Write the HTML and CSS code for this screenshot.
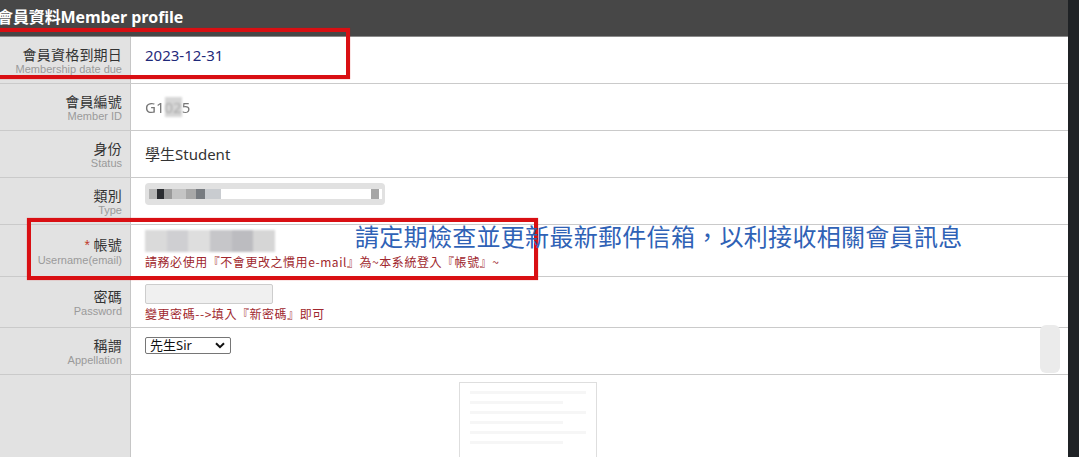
FILE: index.html
```html
<!DOCTYPE html>
<html lang="zh-Hant">
<head>
<meta charset="utf-8">
<title>會員資料</title>
<link rel="stylesheet" href="styles.css">
</head>
<body>
<div class="screen">
  <main class="page">
    <header class="title-bar"><h1>會員資料Member profile</h1></header>
    <div class="form">
      <div class="row r47">
        <div class="label"><span class="zh">會員資格到期日</span><span class="en">Membership date due</span></div>
        <div class="value v-top"><span class="date">2023-12-31</span></div>
      </div>
      <div class="row r47">
        <div class="label"><span class="zh">會員編號</span><span class="en">Member ID</span></div>
        <div class="value v-center"><span class="memid">G1<span class="smudge">02</span>5</span></div>
      </div>
      <div class="row r47">
        <div class="label"><span class="zh">身份</span><span class="en">Status</span></div>
        <div class="value v-center"><span class="plain">學生Student</span></div>
      </div>
      <div class="row r47">
        <div class="label"><span class="zh">類別</span><span class="en">Type</span></div>
        <div class="value v-p5">
          <div class="type-field">
            <div class="type-inner">
              <i class="px d1"></i><i class="px d2"></i><i class="px d3"></i><i class="px d4"></i><i class="px d5"></i><i class="px d6"></i><i class="px d7"></i>
              <span class="type-end"></span>
            </div>
          </div>
        </div>
      </div>
      <div class="row r52">
        <div class="label"><span class="zh"><span class="req">*</span> 帳號</span><span class="en">Username(email)</span></div>
        <div class="value v-p5">
          <div class="mail-field">
            <i class="mp m1"></i><i class="mp m2"></i><i class="mp m3"></i><i class="mp m4"></i><i class="mp m5"></i><i class="mp m6"></i>
          </div>
          <p class="note">請務必使用『不會更改之慣用e-mail』為~本系統登入『帳號』~</p>
        </div>
      </div>
      <div class="row r51">
        <div class="label"><span class="zh">密碼</span><span class="en">Password</span></div>
        <div class="value v-p8">
          <div class="pw-field"></div>
          <p class="note">變更密碼-->填入『新密碼』即可</p>
        </div>
      </div>
      <div class="row r47">
        <div class="label"><span class="zh">稱謂</span><span class="en">Appellation</span></div>
        <div class="value v-p9">
          <div class="select"><span>先生Sir</span>
            <svg class="chev" width="10" height="7" viewBox="0 0 10 7"><path d="M1 1.2 5 5.2 9 1.2" fill="none" stroke="#111" stroke-width="2"/></svg>
          </div>
        </div>
      </div>
      <div class="row rlast">
        <div class="label"></div>
        <div class="value v-p8">
          <div class="photo">
            <i class="ln"></i><i class="ln s"></i><i class="ln"></i><i class="ln s"></i><i class="ln"></i><i class="ln s"></i>
          </div>
        </div>
      </div>
    </div>
  </main>
  <div class="edge"></div>

  <div class="mark mark-1"></div>
  <div class="mark mark-2"></div>
  <p class="callout">請定期檢查並更新最新郵件信箱，以利接收相關會員訊息</p>
  <div class="thumb"></div>
</div>
</body>
</html>
```
FILE: styles.css
```css
html, body {
  margin: 0;
  padding: 0;
  height: 100%;
  overflow: hidden;
  background: #ffffff;
}

.screen {
  position: relative;
  display: flex;
  height: 457px;
  width: 1079px;
  overflow: hidden;
  font-family: "Noto Sans", "Noto Sans CJK TC", sans-serif;
}

.page {
  flex: 0 0 1068px;
  display: flex;
  flex-direction: column;
  overflow: hidden;
}

.edge {
  flex: 1 1 auto;
  background: #1f2225;
}

.title-bar {
  flex: 0 0 37px;
  height: 37px;
  box-sizing: border-box;
  background: #474747;
  border-bottom: 1px solid #8a8a8a;
  display: flex;
  align-items: center;
}

.title-bar h1 {
  margin: -3px 0 0 -3px;
  font-family: "Open Sans", "Noto Sans CJK TC", sans-serif;
  font-size: 16px;
  font-weight: 700;
  color: #ffffff;
  line-height: 20px;
  letter-spacing: -0.1px;
  white-space: nowrap;
}

.form {
  flex: 1 0 auto;
  display: flex;
  flex-direction: column;
}

.row {
  flex: 0 0 auto;
  display: grid;
  grid-template-columns: 131px 1fr;
  box-sizing: border-box;
  border-bottom: 1px solid #cacaca;
}

.r47 { height: 47px; }
.r52 { height: 52px; }
.r51 { height: 51px; }
.rlast { flex: 1 0 auto; height: 90px; border-bottom: none; }

.label {
  background: #e2e2e2;
  border-right: 1px solid #c6c6c6;
  display: flex;
  flex-direction: column;
  justify-content: center;
  align-items: flex-end;
  padding-right: 8px;
  padding-top: 1px;
}

.zh {
  font-family: "Noto Sans CJK TC", sans-serif;
  font-size: 14px;
  line-height: 17px;
  color: #333333;
  letter-spacing: 0.2px;
}

.req {
  color: #c0392b;
  font-family: "Liberation Sans", sans-serif;
}

.en {
  font-family: "Liberation Sans", Arial, sans-serif;
  font-size: 11px;
  line-height: 13px;
  color: #9a9a9a;
}

.value {
  padding-left: 14px;
  display: flex;
  flex-direction: column;
  align-items: flex-start;
}

.v-top { padding-top: 9px; }
.v-center { justify-content: center; }
.v-p5 { padding-top: 5px; }
.v-p8 { padding-top: 7px; }
.v-p9 { padding-top: 9px; }

.date {
  font-size: 15px;
  line-height: 19px;
  color: #1f2a7a;
}

.memid {
  font-size: 15px;
  line-height: 19px;
  color: #777777;
  filter: blur(0.5px);
}

.smudge {
  background: #d6d6d6;
  color: #aaaaaa;
  filter: blur(1px);
}

.plain {
  font-size: 15px;
  line-height: 19px;
  color: #333333;
}

.type-field {
  width: 240px;
  height: 22px;
  box-sizing: border-box;
  background: #e1e1e1;
  border-radius: 4px;
  padding: 6px 3px 6px 4px;
}

.type-inner {
  display: flex;
  height: 10px;
  background: #ffffff;
  filter: blur(0.6px);
}

.px { display: block; height: 10px; width: 8px; }
.d1 { background: #b5b5b5; }
.d2 { background: #2a2c30; width: 7px; }
.d3 { background: #9a9a9a; }
.d4 { background: #c4c4c4; width: 14px; }
.d5 { background: #a8a8a8; width: 10px; }
.d6 { background: #777b80; width: 9px; }
.d7 { background: #c9ccd0; width: 16px; }
.type-end {
  margin-left: auto;
  margin-right: 3px;
  width: 8px;
  background: #a6a6a6;
}

.mail-field {
  width: 130px;
  height: 22px;
  display: grid;
  grid-template-columns: repeat(6, 1fr);
  background: #e6e6e6;
  filter: blur(1.2px);
}
.mp { display: block; }
.m1 { background: #dadada; }
.m2 { background: #cfcfd2; }
.m3 { background: #dedede; }
.m4 { background: #c6c6c9; }
.m5 { background: #bcbcc0; }
.m6 { background: #d6d6d6; }

.note {
  margin: 2px 0 0 0;
  font-family: "Noto Sans CJK TC", sans-serif;
  font-size: 12px;
  line-height: 15px;
  color: #a0272d;
  letter-spacing: 0.55px;
  white-space: nowrap;
}

.pw-field {
  width: 128px;
  height: 20px;
  box-sizing: border-box;
  background: #f0f0f0;
  border: 1px solid #cdcdcd;
  border-radius: 2px;
}

.select {
  width: 86px;
  height: 17px;
  box-sizing: border-box;
  border: 1px solid #767676;
  border-radius: 2px;
  display: flex;
  align-items: center;
  justify-content: space-between;
  padding: 0 5px 0 4px;
  font-size: 13px;
  line-height: 15px;
  color: #111111;
  background: #ffffff;
}

.chev { display: block; }

.photo {
  margin-left: 314px;
  width: 138px;
  height: 90px;
  box-sizing: border-box;
  border: 1px solid #dedede;
  padding: 8px 10px;
  display: flex;
  flex-direction: column;
  gap: 7px;
}

.ln {
  display: block;
  height: 3px;
  background: #f6f6f6;
}
.ln.s { width: 80%; }

/* overlays: annotation marks drawn on top of the screenshot */
.mark {
  position: absolute;
  box-sizing: border-box;
  border: 4px solid #d90f13;
  box-shadow: 0 0 1px rgba(217, 15, 19, 0.6);
}

.mark-1 {
  left: -10px;
  top: 28px;
  width: 360px;
  height: 51px;
}

.mark-2 {
  left: 27px;
  top: 218px;
  width: 511px;
  height: 62px;
}

.callout {
  position: absolute;
  left: 355px;
  top: 221px;
  margin: 0;
  font-family: "Noto Sans CJK SC", "Noto Sans CJK TC", sans-serif;
  font-size: 24px;
  line-height: 30px;
  font-weight: 400;
  color: #2f62b6;
  letter-spacing: 0.3px;
  white-space: nowrap;
}

.thumb {
  position: absolute;
  left: 1040px;
  top: 325px;
  width: 20px;
  height: 48px;
  background: #ebebeb;
  border-radius: 6px;
}
```
